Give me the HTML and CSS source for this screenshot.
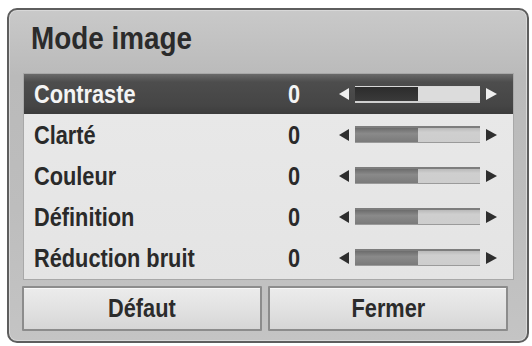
FILE: index.html
```html
<!DOCTYPE html>
<html lang="fr">
<head>
<meta charset="utf-8">
<title>Mode image</title>
<link rel="stylesheet" href="styles.css">
</head>
<body>
<div class="frame">
  <h1 class="title"><span class="narrow">Mode image</span></h1>
  <div class="panel">
    <div class="row active">
      <span class="label narrow">Contraste</span><span class="value narrow">0</span>
      <span class="slider"><span class="arrow left"></span><span class="bar"><span class="fill" style="width:50%"></span></span><span class="arrow right"></span></span>
    </div>
    <div class="row">
      <span class="label narrow">Clarté</span><span class="value narrow">0</span>
      <span class="slider"><span class="arrow left"></span><span class="bar"><span class="fill" style="width:50%"></span></span><span class="arrow right"></span></span>
    </div>
    <div class="row">
      <span class="label narrow">Couleur</span><span class="value narrow">0</span>
      <span class="slider"><span class="arrow left"></span><span class="bar"><span class="fill" style="width:50%"></span></span><span class="arrow right"></span></span>
    </div>
    <div class="row">
      <span class="label narrow">Définition</span><span class="value narrow">0</span>
      <span class="slider"><span class="arrow left"></span><span class="bar"><span class="fill" style="width:50%"></span></span><span class="arrow right"></span></span>
    </div>
    <div class="row">
      <span class="label narrow">Réduction bruit</span><span class="value narrow">0</span>
      <span class="slider"><span class="arrow left"></span><span class="bar"><span class="fill" style="width:50%"></span></span><span class="arrow right"></span></span>
    </div>
  </div>
  <div class="buttons">
    <button class="btn"><span class="narrow center">Défaut</span></button>
    <button class="btn"><span class="narrow center">Fermer</span></button>
  </div>
</div>
</body>
</html>
```

FILE: styles.css
```css
html, body {
  margin: 0;
  padding: 0;
  background: #ffffff;
  width: 532px;
  height: 346px;
  overflow: hidden;
}

body {
  font-family: "Liberation Sans", Arial, sans-serif;
}

.narrow {
  display: inline-block;
  transform: scaleX(0.87);
  transform-origin: left center;
  white-space: nowrap;
}

.narrow.center {
  transform-origin: center center;
}

.frame {
  box-sizing: border-box;
  margin: 8px 0 0 7px;
  width: 522px;
  height: 335px;
  border: 2px solid #5e5e5e;
  border-radius: 10px;
  background: linear-gradient(to bottom, #c9c9c9 0%, #bababa 20%, #bdbdbd 60%, #c4c4c4 100%);
  box-shadow: inset 0 0 0 1px #d8d8d8;
  padding: 0 0 0 14px;
  display: flex;
  flex-direction: column;
}

.title {
  margin: 0;
  height: 63px;
  box-sizing: border-box;
  padding: 10px 0 0 8px;
  font-size: 32px;
  font-weight: bold;
  color: #2b2b2b;
  line-height: 36px;
}

.panel {
  box-sizing: border-box;
  width: 491px;
  height: 207px;
  background: linear-gradient(to bottom, #e9e9e9, #e4e4e4);
  border: 1px solid #a8a8a8;
  display: flex;
  flex-direction: column;
}

.row {
  display: grid;
  grid-template-columns: 254px 51px auto;
  align-items: center;
  height: 41px;
  padding-left: 10px;
  color: #2a2a2a;
  font-size: 25px;
  font-weight: bold;
}

.row.active {
  height: 40px;
  color: #f4f4f4;
  background: linear-gradient(to bottom, #6a6a6a 0%, #4d4d4d 20%, #454545 80%, #3c3c3c 100%);
}

.label, .value {
  line-height: 28px;
}

.slider {
  display: flex;
  align-items: center;
}

.arrow {
  width: 0;
  height: 0;
  border-top: 6px solid transparent;
  border-bottom: 6px solid transparent;
}

.arrow.left {
  border-right: 10px solid #2e2e2e;
  margin-right: 6px;
}

.arrow.right {
  border-left: 11px solid #2e2e2e;
  margin-left: 6px;
}

.active .arrow.left {
  border-right-color: #f0f0f0;
}

.active .arrow.right {
  border-left-color: #f0f0f0;
}

.bar {
  box-sizing: border-box;
  width: 125px;
  height: 17px;
  background: linear-gradient(to bottom, #b9b9b9, #cfcfcf 30%, #cdcdcd);
  border-top: 2px solid #7d7d7d;
  border-bottom: 1px solid #9a9a9a;
  display: flex;
}

.fill {
  height: 100%;
  background: linear-gradient(to bottom, #6c6c6c, #8a8a8a 40%, #7a7a7a);
}

.active .bar {
  background: #dcdcdc;
  border-top: 1px solid #d8d8d8;
  border-bottom: 2px solid #cfcfcf;
}

.active .fill {
  background: linear-gradient(to bottom, #2c2c2c, #3a3a3a);
}

.buttons {
  display: flex;
  gap: 6px;
  margin-top: 6px;
  margin-left: -1px;
}

.btn {
  box-sizing: border-box;
  width: 240px;
  height: 45px;
  border: 2px solid #8c8c8c;
  border-radius: 1px;
  background: linear-gradient(to bottom, #ececec 0%, #e2e2e2 50%, #d6d6d6 100%);
  box-shadow: inset 0 1px 0 #f8f8f8;
  font-family: inherit;
  font-size: 25px;
  font-weight: bold;
  color: #2b2b2b;
  padding: 0;
}
```
